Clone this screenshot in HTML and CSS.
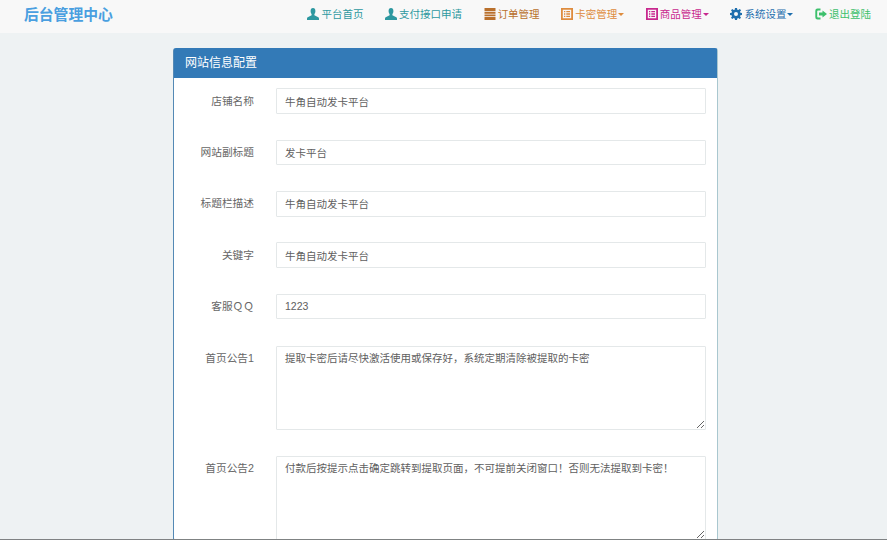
FILE: index.html
```html
<!DOCTYPE html>
<html lang="zh-CN">
<head>
<meta charset="utf-8">
<title>后台管理中心</title>
<link rel="stylesheet" href="styles.css">
</head>
<body>
<svg class="defs" width="0" height="0" aria-hidden="true">
  <symbol id="i-user" viewBox="0 0 12 12"><path d="M6 0C4.400 0 3.600 1.300 3.600 3.100c0 1.300.4 2.400 1 3v1.200L1.200 9C.4 9.300 0 9.800 0 10.500V12h12v-1.500c0-.7-.4-1.200-1.200-1.500L7.400 7.300V6.100c.6-.6 1-1.700 1-3C8.400 1.300 7.600 0 6 0z"/></symbol>
  <symbol id="i-cal" viewBox="0 0 12 12"><path d="M.5 0h11v3.200H.5zM.5 4h11v1.700H.5zM.5 6.500h11v1.700H.5zM.5 9h11v3H.5z"/></symbol>
  <symbol id="i-list" viewBox="0 0 12 12"><path fill-rule="evenodd" d="M0 0h12v12H0zm1.800 1.800v8.400h8.400V1.800zM3 3h1.300v1.300H3zm2.300 0h3.700v1.300H5.300zM3 5.300h1.300v1.400H3zm2.300 0h3.700v1.400H5.300zM3 7.700h1.300V9H3zm2.300 0h3.700V9H5.300z"/></symbol>
  <symbol id="i-cog" viewBox="0 0 12 12"><path fill-rule="evenodd" d="M5 0h2l.3 1.700 1 .4L9.800 1l1.300 1.300L10 3.700l.4 1L12 5v2l-1.600.3-.4 1 1 1.400-1.300 1.400-1.400-1-1 .4L7 12H5l-.3-1.500-1-.4-1.400 1L1 9.700l1-1.400-.4-1L0 7V5l1.600-.3.400-1-1-1.400L2.300 1l1.400 1.100 1-.4zM6 4a2 2 0 1 0 0 4 2 2 0 0 0 0-4z"/></symbol>
  <symbol id="i-out" viewBox="0 0 12 12"><path d="M5.500.5H2.500A2.200 2.200 0 0 0 .3 2.700v6.600a2.200 2.200 0 0 0 2.200 2.200h3V9.500H3a.8.800 0 0 1-.8-.8V3.300A.8.800 0 0 1 3 2.500h2.500z"/><path d="M7.500 2.500L12 6 7.500 9.500V7.500H4v-3h3.500z"/></symbol>
</svg>
<div class="page">
  <header class="navbar">
    <a class="brand">后台管理中心</a>
    <nav class="nav">
      <a class="item teal"><svg class="icon"><use href="#i-user"/></svg>平台首页</a>
      <a class="item teal"><svg class="icon"><use href="#i-user"/></svg>支付接口申请</a>
      <a class="item brown"><svg class="icon"><use href="#i-cal"/></svg>订单管理</a>
      <a class="item orange"><svg class="icon"><use href="#i-list"/></svg>卡密管理<span class="caret"></span></a>
      <a class="item magenta"><svg class="icon"><use href="#i-list"/></svg>商品管理<span class="caret"></span></a>
      <a class="item blue"><svg class="icon"><use href="#i-cog"/></svg>系统设置<span class="caret"></span></a>
      <a class="item green"><svg class="icon"><use href="#i-out"/></svg>退出登陆</a>
    </nav>
  </header>
  <main class="main">
    <section class="panel">
      <h3 class="panel-heading">网站信息配置</h3>
      <form class="panel-body">
        <label class="row"><span class="label">店铺名称</span><input class="control" value="牛角自动发卡平台"></label>
        <label class="row"><span class="label">网站副标题</span><input class="control" value="发卡平台"></label>
        <label class="row"><span class="label">标题栏描述</span><input class="control" value="牛角自动发卡平台"></label>
        <label class="row"><span class="label">关键字</span><input class="control" value="牛角自动发卡平台"></label>
        <label class="row"><span class="label">客服ＱＱ</span><input class="control" value="1223"></label>
        <label class="row row-first-area"><span class="label">首页公告1</span><textarea class="control area">提取卡密后请尽快激活使用或保存好，系统定期清除被提取的卡密</textarea></label>
        <label class="row"><span class="label">首页公告2</span><textarea class="control area">付款后按提示点击确定跳转到提取页面，不可提前关闭窗口！否则无法提取到卡密！</textarea></label>
      </form>
    </section>
  </main>
</div>
</body>
</html>
```
FILE: styles.css
```css
html { background: #fff; }
body {
  margin: 0;
  font-family: "Liberation Sans", "Noto Sans CJK SC", sans-serif;
  color: #555;
}
.defs { position: absolute; }
.page {
  height: 539px;
  overflow: hidden;
  background: #eef2f3;
  border-bottom: 1px solid #7f8283;
}
.navbar {
  height: 33px;
  display: flex;
  align-items: center;
  justify-content: space-between;
  padding: 0 16px 5px 24px;
  box-sizing: border-box;
  background: #f8f8f8;
}
.brand {
  margin-bottom: 1px;
  font-size: 14.8px;
  font-weight: 700;
  color: #4a9fe0;
}
.nav {
  display: flex;
  align-items: center;
  gap: 21.6px;
}
.item {
  display: flex;
  align-items: center;
  font-size: 10.5px;
  line-height: 16px;
}
.icon {
  width: 12px;
  height: 12px;
  margin-right: 2px;
  fill: currentColor;
  flex: none;
}
.caret {
  width: 0;
  height: 0;
  margin-left: 1px;
  border-top: 3px solid currentColor;
  border-left: 3px solid transparent;
  border-right: 3px solid transparent;
}
.teal { color: #2d98a0; }
.brown { color: #b9702c; }
.orange { color: #de8c3e; }
.magenta { color: #c8288e; }
.blue { color: #1f6fae; }
.green { color: #3dc06c; }
.main {
  width: 545px;
  margin: 15px auto 0 173px;
}
.panel {
  background: #fff;
  border: 1px solid #337ab7;
  border-left-color: #5489b5;
  border-right-color: #a9c7cf;
  border-radius: 3px;
  box-sizing: border-box;
}
.panel-heading {
  margin: 0;
  height: 29px;
  padding: 0 11px;
  background: #337ab7;
  color: #fff;
  font-size: 12px;
  font-weight: 400;
  line-height: 28px;
}
.panel-body {
  display: flex;
  flex-direction: column;
  gap: 25.7px;
  padding: 10.4px 11px 0 0;
}
.row {
  display: flex;
  gap: 22px;
}
.row-first-area { margin-top: 0.8px; }
.label {
  width: 80px;
  height: 25.6px;
  box-sizing: border-box;
  padding-top: 0.4px;
  text-align: right;
  flex: none;
  font-size: 10.7px;
  line-height: 25.6px;
  color: #666;
}
.control {
  flex: 1;
  min-width: 0;
  height: 25.6px;
  box-sizing: border-box;
  padding: 4px 8px;
  border: 1px solid #e4e8e9;
  border-radius: 1px;
  background: #fff;
  color: #606060;
  font: 10.5px/15px "Liberation Sans", "Noto Sans CJK SC", sans-serif;
  outline: none;
}
.area {
  height: 84.5px;
  resize: vertical;
}
```
